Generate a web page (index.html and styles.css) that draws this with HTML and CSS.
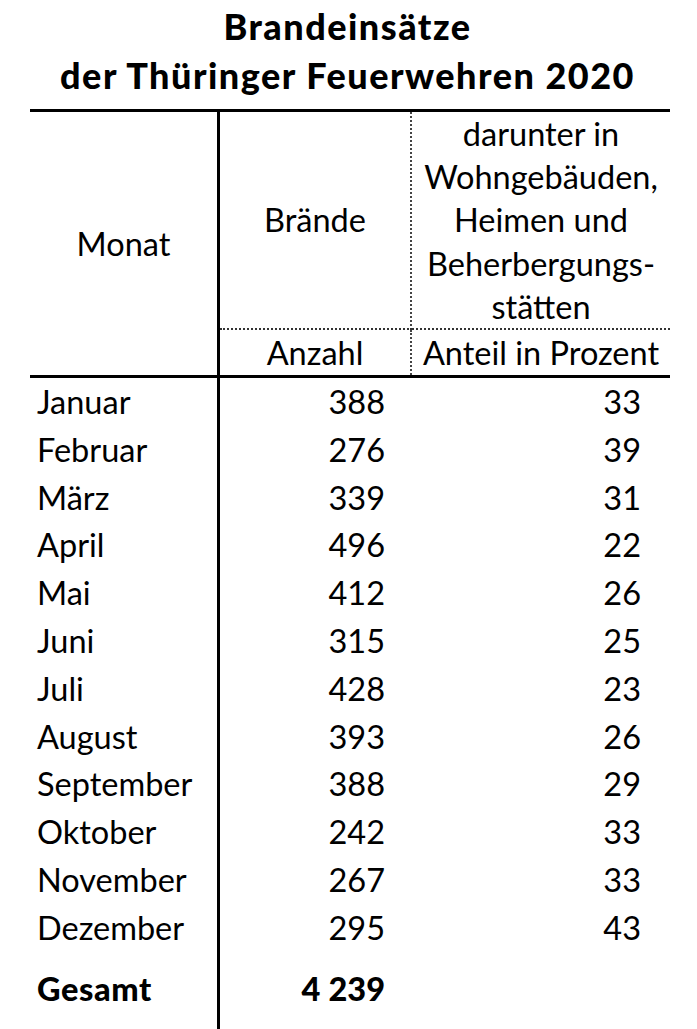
FILE: index.html
```html
<!DOCTYPE html>
<html lang="de">
<head>
<meta charset="utf-8">
<title>Brandeinsätze der Thüringer Feuerwehren 2020</title>
<link rel="stylesheet" href="styles.css">
</head>
<body>
<div class="page">
  <h1 class="title">Brandeinsätze<br>der Thüringer Feuerwehren 2020</h1>
  <table class="tbl">
    <thead>
      <tr class="h1row">
        <th rowspan="2" class="c1 monat">Monat</th>
        <th class="c2 top">Brände</th>
        <th class="c3 top">darunter in<br>Wohngebäuden,<br>Heimen und<br>Beherbergungs-<br>stätten</th>
      </tr>
      <tr class="h2row">
        <th class="c2 unit">Anzahl</th>
        <th class="c3 unit">Anteil in Prozent</th>
      </tr>
    </thead>
    <tbody>
      <tr class="first"><td class="c1">Januar</td><td class="c2">388</td><td class="c3">33</td></tr>
      <tr><td class="c1">Februar</td><td class="c2">276</td><td class="c3">39</td></tr>
      <tr><td class="c1">März</td><td class="c2">339</td><td class="c3">31</td></tr>
      <tr><td class="c1">April</td><td class="c2">496</td><td class="c3">22</td></tr>
      <tr><td class="c1">Mai</td><td class="c2">412</td><td class="c3">26</td></tr>
      <tr><td class="c1">Juni</td><td class="c2">315</td><td class="c3">25</td></tr>
      <tr><td class="c1">Juli</td><td class="c2">428</td><td class="c3">23</td></tr>
      <tr><td class="c1">August</td><td class="c2">393</td><td class="c3">26</td></tr>
      <tr><td class="c1">September</td><td class="c2">388</td><td class="c3">29</td></tr>
      <tr><td class="c1">Oktober</td><td class="c2">242</td><td class="c3">33</td></tr>
      <tr><td class="c1">November</td><td class="c2">267</td><td class="c3">33</td></tr>
      <tr><td class="c1">Dezember</td><td class="c2">295</td><td class="c3">43</td></tr>
      <tr class="total"><td class="c1">Gesamt</td><td class="c2">4&#8239;239</td><td class="c3"></td></tr>
    </tbody>
  </table>
</div>
</body>
</html>
```
FILE: styles.css
```css
html, body {
  margin: 0;
  padding: 0;
  background: #ffffff;
}
body {
  font-family: "Lato", "Liberation Sans", sans-serif;
  color: #000000;
  width: 697px;
  height: 1029px;
  overflow: hidden;
}
.page {
  padding: 0 32px 0 30px;
}
.title {
  margin: 0;
  padding-top: 2px;
  height: 109px;
  box-sizing: border-box;
  font-size: 36px;
  font-weight: 900;
  letter-spacing: 1.5px;
  line-height: 49px;
  text-align: center;
}
.tbl {
  width: 635px;
  border-collapse: collapse;
  border-top: 3px solid #000;
  font-size: 32.5px;
  table-layout: fixed;
}
.tbl th, .tbl td {
  padding: 0;
  font-weight: 400;
}
.c1 { width: 187px; }
.c2 { width: 190px; }
.c3 { width: 258px; }
.tbl .c1 {
  border-right: 3px solid #000;
}
.monat {
  text-align: center;
  vertical-align: middle;
  border-bottom: 3px solid #000;
}
.top {
  height: 216px;
  line-height: 43.2px;
  text-align: center;
  vertical-align: middle;
  border-bottom: 2px dotted #333;
}
th.c2 {
  border-right: 2px dotted #444;
}
.unit {
  height: 45px;
  line-height: 45px;
  text-align: center;
  border-bottom: 3px solid #000;
}
tbody td {
  height: 47.8px;
  line-height: 47.8px;
}
tbody td.c1 {
  padding-left: 7px;
}
tbody td.c2 {
  text-align: right;
  padding-right: 26px;
}
tbody td.c3 {
  text-align: right;
  padding-right: 29px;
}
.total td {
  font-weight: 900;
  letter-spacing: 0.6px;
  padding-top: 13px;
  padding-bottom: 40px;
  vertical-align: top;
}
```
